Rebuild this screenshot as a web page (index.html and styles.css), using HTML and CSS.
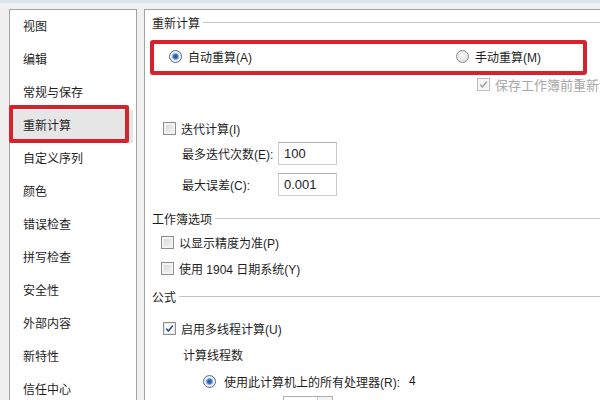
FILE: index.html
```html
<!DOCTYPE html>
<html lang="zh-CN">
<head>
<meta charset="utf-8">
<link rel="stylesheet" href="styles.css">
</head>
<body>
<div class="topband"></div>
<div class="frame">
  <div class="nav">
    <div class="item">视图</div>
    <div class="item">编辑</div>
    <div class="item">常规与保存</div>
    <div class="item sel">重新计算</div>
    <div class="item">自定义序列</div>
    <div class="item">颜色</div>
    <div class="item">错误检查</div>
    <div class="item">拼写检查</div>
    <div class="item">安全性</div>
    <div class="item">外部内容</div>
    <div class="item">新特性</div>
    <div class="item">信任中心</div>
  </div>
  <div class="main">
    <div class="group h1"><span>重新计算</span></div>
    <div class="row radios">
      <span class="opt opt-auto"><span class="radio on"></span>自动重算(A)</span>
      <span class="opt opt-man"><span class="radio"></span>手动重算(M)</span>
    </div>
    <div class="row save">
      <span class="check dis"><svg viewBox="0 0 9 9" width="9" height="9"><path d="M1.2 4.6 L3.4 7 L7.8 1.4" fill="none" stroke="#a8a8a8" stroke-width="1.6"/></svg></span>
      <span class="distext">保存工作簿前重新计算</span>
    </div>
    <div class="row iter"><span class="check"></span>迭代计算(I)</div>
    <div class="row field f1"><span class="flabel">最多迭代次数(E):</span><span class="input">100</span></div>
    <div class="row field f2"><span class="flabel">最大误差(C):</span><span class="input">0.001</span></div>
    <div class="group h2"><span>工作簿选项</span></div>
    <div class="row wb1"><span class="check"></span>以显示精度为准(P)</div>
    <div class="row wb2"><span class="check"></span>使用 1904 日期系统(Y)</div>
    <div class="group h3"><span>公式</span></div>
    <div class="row mt"><span class="check on"><svg viewBox="0 0 9 9" width="9" height="9"><path d="M1.2 4.6 L3.4 7 L7.8 1.4" fill="none" stroke="#3c4f8a" stroke-width="1.6"/></svg></span>启用多线程计算(U)</div>
    <div class="row threads">计算线程数</div>
    <div class="row allp"><span class="radio on"></span>使用此计算机上的所有处理器(R):<span class="num">4</span></div>
    <div class="row spin"><span class="spinbox"><span class="spinbtn"></span></span></div>
  </div>
</div>
</body>
</html>
```

FILE: styles.css
```css
*, *::before, *::after { box-sizing: border-box; }
html, body { margin: 0; padding: 0; }
body {
  width: 600px;
  height: 400px;
  overflow: hidden;
  background: #f0f0f0;
  font-family: "Liberation Sans", "Noto Sans CJK SC", sans-serif;
  font-size: 12px;
  color: #1e1e1e;
}
.topband { height: 3px; background: #dbe5f2; }
.frame {
  display: flex;
  gap: 7px;
  padding: 6px 0 0 9px;
  height: 397px;
  overflow: hidden;
}
.nav {
  width: 128px;
  height: 420px;
  background: #fff;
  border: 1px solid #a3a3a3;
  padding-top: 0.5px;
  flex-shrink: 0;
}
.item {
  height: 33px;
  line-height: 33px;
  padding-left: 13px;
  position: relative;
}
.item.sel { background: #e6e6e6; margin: 0 3px 0 2px; padding-left: 11px; }
.item.sel::after {
  content: "";
  position: absolute;
  left: -3px; top: -5px;
  width: 120px; height: 38px;
  border: 4px solid #d7222e;
  border-radius: 2px;
}
.main {
  flex: 1;
  height: 420px;
  background: #fff;
  border: 1px solid #a3a3a3;
  border-right: none;
  padding-left: 7px;
}
.row { display: flex; align-items: center; height: 20px; white-space: nowrap; }
.group { display: flex; align-items: center; height: 20px; }
.group::after { content: ""; flex: 1; height: 1px; background: #c4c4c4; margin-left: 3px; }
.h1 { margin-top: 2px; }
.radios { margin-top: 14px; position: relative; }
.radios::after {
  content: "";
  position: absolute;
  left: -2px; top: -6px;
  width: 437px; height: 35px;
  border: 4px solid #d7222e;
  border-radius: 3px;
}
.opt { display: flex; align-items: center; }
.opt-auto { margin-left: 17px; }
.opt-man { margin-left: 204px; }
.radio {
  width: 13px; height: 13px;
  border-radius: 50%;
  border: 1px solid #8c8c8c;
  background: radial-gradient(circle at 50% 40%, #fafafa 0, #e2e2e2 70%, #d0d0d0 100%);
  margin-right: 6px;
  display: inline-block;
  position: relative;
  flex-shrink: 0;
}
.radio.on {
  border-color: #5a6c86;
  background: radial-gradient(circle at 50% 50%, #1f4f9c 0, #3c78c4 2.2px, #a8c6e6 3.4px, #f2f2f2 4px, #e4e4e4 100%);
}
.save { margin-top: 8px; padding-left: 325px; color: #a8a8a8; font-size: 13px; }
.check {
  width: 13px; height: 13px;
  border: 1px solid #8e8e8e;
  background: linear-gradient(135deg, #d4d4d4, #f6f6f6);
  box-shadow: inset 0 0 0 2px #f3f3f3;
  margin-right: 5px;
  display: inline-flex;
  align-items: center;
  justify-content: center;
  flex-shrink: 0;
}
.check.on { background: #fdfdfd; box-shadow: inset 0 0 0 1px #e8e8e8; }
.check.dis { border-color: #bdbdbd; background: #f7f7f7; box-shadow: none; }
.iter { margin-top: 24px; padding-left: 11px; }
.field { height: 23px; padding-left: 30px; }
.f1 { margin-top: 4px; }
.f2 { margin-top: 8px; }
.flabel { width: 96px; }
.input {
  width: 59px; height: 23px;
  border: 1px solid #c9ccd1;
  border-top-color: #abadb3;
  padding-left: 5px;
  line-height: 21px;
  font-size: 13px;
}
.h2 { margin-top: 12px; }
.wb1 { margin-top: 4px; padding-left: 9px; }
.wb2 { margin-top: 6px; padding-left: 9px; }
.h3 { margin-top: 8px; }
.mt { margin-top: 12px; padding-left: 11px; }
.threads { margin-top: 6px; padding-left: 31px; }
.allp { margin-top: 7px; padding-left: 51px; }
.allp .radio { margin-right: 8px; }
.num { margin-left: 9px; }
.spin { margin-top: 5px; padding-left: 131px; align-items: flex-start; }
.spinbox {
  width: 50px; height: 22px;
  border: 1px solid #abadb3;
  display: flex; justify-content: flex-end;
}
.spinbtn { width: 15px; border-left: 1px solid #c9c9c9; background: #f4f4f4; }
```
